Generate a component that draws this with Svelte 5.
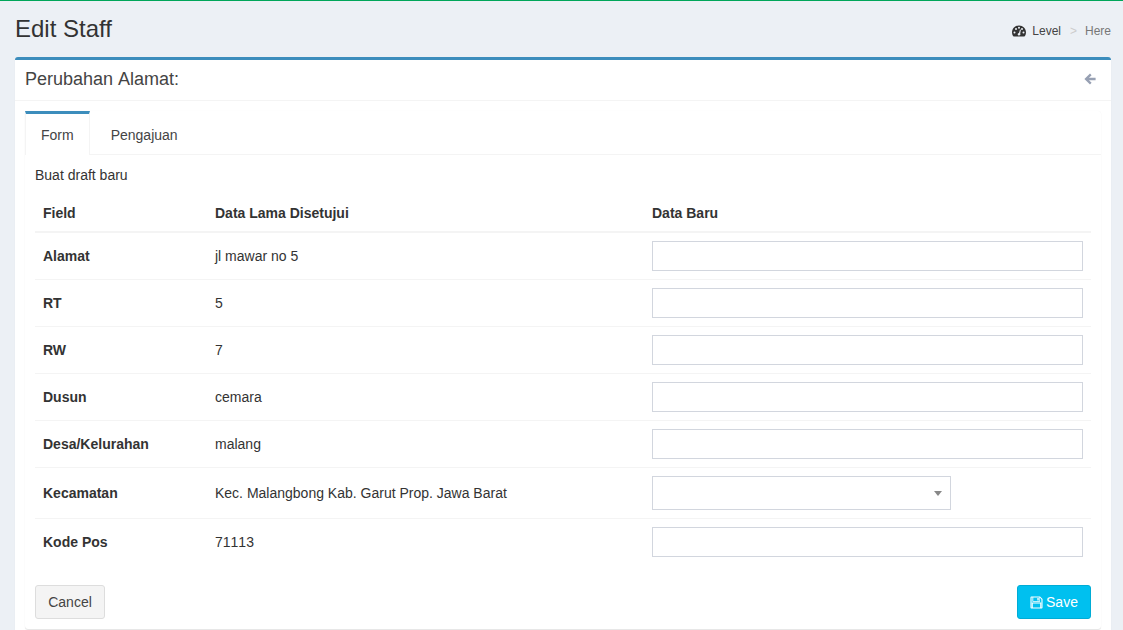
<script>
  const rows = [
    { field: "Alamat", old: "jl mawar no 5" },
    { field: "RT", old: "5" },
    { field: "RW", old: "7" },
    { field: "Dusun", old: "cemara" },
    { field: "Desa/Kelurahan", old: "malang" },
    { field: "Kecamatan", old: "Kec. Malangbong Kab. Garut Prop. Jawa Barat", select: true },
    { field: "Kode Pos", old: "71113", plain: true },
  ];
</script>

<div class="page">
  <header class="content-header">
    <h1>Edit Staff</h1>
    <ol class="breadcrumb">
      <li class="crumb-link">
        <svg class="gauge" viewBox="0 0 14 12" width="14" height="12" aria-hidden="true">
          <path fill-rule="evenodd" d="M7 0.5C3.1 0.5 0 3.6 0 7.5c0 1.3.3 2.5 1 3.5.2.3.4.5.8.5h10.4c.4 0 .6-.2.8-.5.7-1 1-2.2 1-3.5 0-3.9-3.1-7-7-7zM2.5 8.4a1 1 0 1 1 0-2 1 1 0 0 1 0 2zM4 5a1 1 0 1 1 0-2 1 1 0 0 1 0 2zM7 3.7a1 1 0 1 1 0-2 1 1 0 0 1 0 2zM8.2 8.6c.2.4.3.8.1 1.2-.3.6-1.1.9-1.8.6-.7-.3-1-1.1-.7-1.7.2-.5.7-.8 1.2-.8L8 4.4l.9.3zM10 5a1 1 0 1 1 0-2 1 1 0 0 1 0 2zM11.5 8.4a1 1 0 1 1 0-2 1 1 0 0 1 0 2z"/>
        </svg>
        Level
      </li>
      <li class="sep">&gt;</li>
      <li class="crumb-active">Here</li>
    </ol>
  </header>

  <section class="box">
    <div class="box-header">
      <h3>Perubahan Alamat:</h3>
      <svg class="back" viewBox="0 0 12 12" width="12" height="12" aria-hidden="true">
        <path d="M6 .6 .4 6 6 11.4l1.6-1.6L5 7.3h6.6V4.7H5l2.6-2.5z" />
      </svg>
    </div>

    <div class="box-body">
      <div class="tabs-custom">
        <ul class="nav-tabs">
          <li class="tab active">Form</li>
          <li class="tab">Pengajuan</li>
        </ul>

        <div class="tab-content">
          <p class="lead-text">Buat draft baru</p>

          <table>
            <thead>
              <tr>
                <th class="col-field">Field</th>
                <th class="col-old">Data Lama Disetujui</th>
                <th>Data Baru</th>
              </tr>
            </thead>
            <tbody>
              {#each rows as row}
                <tr>
                  <td class="field">{row.field}</td>
                  <td class:plain={row.plain}>{row.old}</td>
                  <td>
                    {#if row.select}
                      <div class="select"><span class="caret"></span></div>
                    {:else}
                      <input type="text" class="form-control" />
                    {/if}
                  </td>
                </tr>
              {/each}
            </tbody>
          </table>

          <div class="actions">
            <button class="btn btn-default">Cancel</button>
            <button class="btn btn-save">
              <svg viewBox="0 0 14 14" width="13" height="13" aria-hidden="true">
                <path fill-rule="evenodd" d="M1.5 0.5h9.3L13.5 3.2v9.3c0 .6-.4 1-1 1h-11c-.6 0-1-.4-1-1v-11c0-.6.4-1 1-1zM3.5 1.7v3.6h6.6V1.7zM7.9 2.2h1.5v2.6H7.9zM3 8v4.3h8V8zM1.7 1.7v10.6h.3V7h10v5.3h.3V3.7L10.8 2v4.3H2.6V1.7z"/>
              </svg>
              Save
            </button>
          </div>
        </div>
      </div>
    </div>
  </section>
</div>

<style>
  :global(body) {
    margin: 0;
    background: #ecf0f5;
    overflow: hidden;
  }

  .page {
    height: 630px;
    box-sizing: border-box;
    border-top: 1px solid #00a65a;
    background: #ecf0f5;
    color: #333;
    font-family: "Liberation Sans", Arial, sans-serif;
    font-size: 14px;
    line-height: 20px;
    overflow: hidden;
  }

  .content-header {
    display: flex;
    justify-content: space-between;
    align-items: center;
    height: 56px;
    padding: 0 12px 0 15px;
  }

  h1 {
    margin: 0;
    font-size: 24px;
    font-weight: 400;
    line-height: 24px;
  }

  .breadcrumb {
    display: flex;
    align-items: center;
    margin: 4px 0 0;
    padding: 0;
    list-style: none;
    font-size: 12px;
  }

  .crumb-link {
    display: flex;
    align-items: center;
    color: #444;
  }

  .gauge {
    margin-right: 6px;
    fill: #333;
  }

  .sep {
    margin: 0 8px 0 9px;
    color: #ccc;
  }

  .crumb-active {
    color: #777;
  }

  .box {
    margin: 0 12px 0 15px;
    background: #fff;
    border-top: 3px solid #3c8dbc;
    border-radius: 3px;
    box-shadow: 0 1px 1px rgba(0, 0, 0, 0.1);
  }

  .box-header {
    display: flex;
    justify-content: space-between;
    align-items: center;
    height: 38px;
    padding: 0 15px 2px 10px;
    border-bottom: 1px solid #f4f4f4;
  }

  h3 {
    margin: 0;
    font-size: 18px;
    font-weight: 400;
    line-height: 18px;
    color: #444;
    font-kerning: none;
  }

  .back {
    fill: #97a0b3;
  }

  .box-body {
    padding: 10px;
  }

  .tabs-custom {
    border-radius: 3px;
    box-shadow: 0 1px 1px rgba(0, 0, 0, 0.1), 0 0 1px rgba(0, 0, 0, 0.06);
    background: #fff;
  }

  .nav-tabs {
    display: flex;
    margin: 0;
    padding: 0;
    list-style: none;
    height: 43px;
    border-bottom: 1px solid #f4f4f4;
  }

  .tab {
    padding: 11px 15px 0;
    margin-right: 6px;
    color: #444;
    border-top: 3px solid transparent;
    height: 29px;
  }

  .tab.active {
    border-top-color: #3c8dbc;
    border-left: 1px solid #f4f4f4;
    border-right: 1px solid #f4f4f4;
    background: #fff;
    height: 30px;
  }

  .tab-content {
    padding: 10px;
  }

  .lead-text {
    margin: 0 0 10px;
  }

  table {
    width: 100%;
    margin-bottom: 20px;
    border-collapse: collapse;
    table-layout: fixed;
  }

  th {
    text-align: left;
    padding: 8px;
    border-bottom: 2px solid #f4f4f4;
  }

  .col-field {
    width: 156px;
  }

  .col-old {
    width: 421px;
  }

  td {
    padding: 8px;
    border-top: 1px solid #f4f4f4;
    vertical-align: middle;
  }

  td.plain {
    font-kerning: none;
  }

  tbody tr:first-child td {
    border-top: 0;
  }

  .field {
    font-weight: 700;
  }

  .form-control {
    display: block;
    width: 100%;
    height: 30px;
    box-sizing: border-box;
    padding: 6px 12px;
    border: 1px solid #d2d6de;
    border-radius: 0;
    background: #fff;
    font: inherit;
    outline: none;
  }

  .select {
    position: relative;
    width: 299px;
    height: 34px;
    box-sizing: border-box;
    border: 1px solid #d2d6de;
    background: #fff;
  }

  .caret {
    position: absolute;
    top: 14px;
    right: 8px;
    width: 0;
    height: 0;
    border-style: solid;
    border-width: 5px 4px 0;
    border-color: #888 transparent transparent;
  }

  .actions {
    display: flex;
    justify-content: space-between;
  }

  .btn {
    display: flex;
    align-items: center;
    justify-content: center;
    height: 34px;
    box-sizing: border-box;
    padding: 6px 12px;
    border: 1px solid;
    border-radius: 3px;
    font: inherit;
  }

  .btn-default {
    width: 70px;
    background: #f4f4f4;
    border-color: #ddd;
    color: #444;
  }

  .btn-save {
    width: 74px;
    gap: 3px;
    background: #00c0ef;
    border-color: #00acd6;
    color: #fff;
  }

  .btn-save svg {
    fill: #fff;
  }
</style>
